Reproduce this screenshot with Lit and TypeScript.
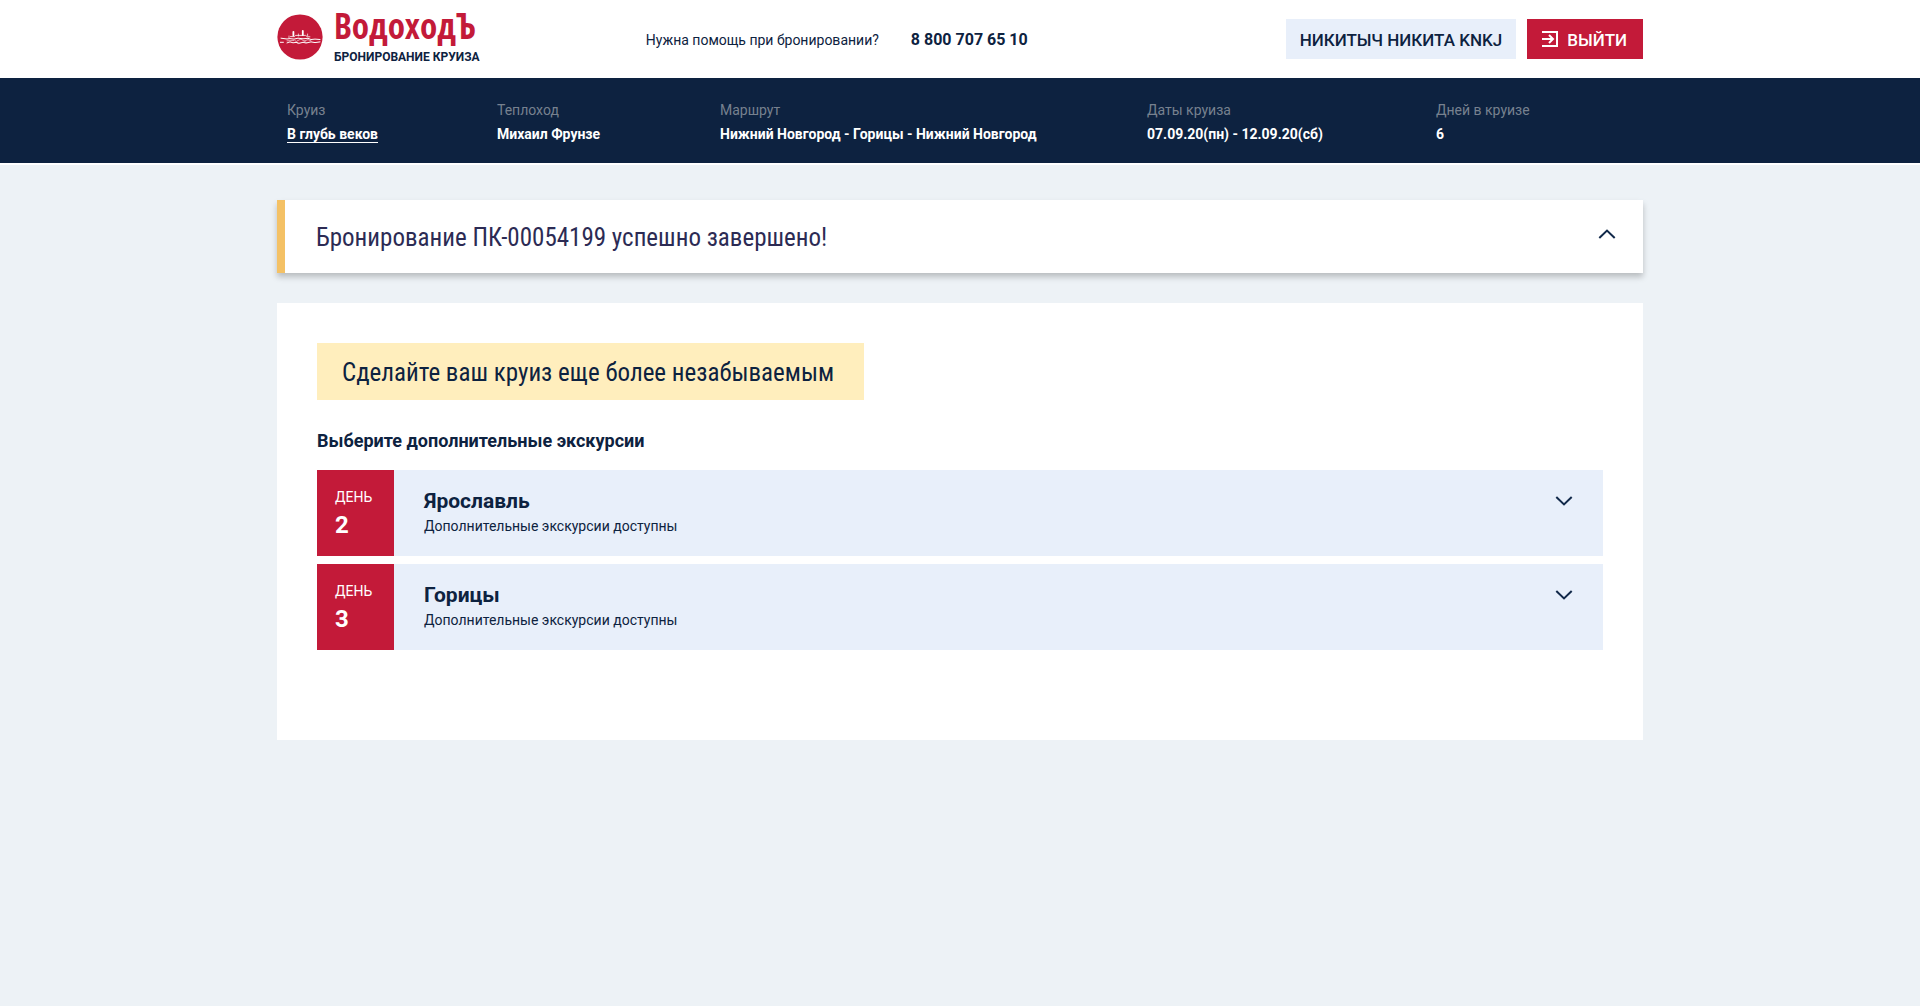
import { LitElement, html, css, svg } from "lit";
import { customElement, property, state } from "lit/decorators.js";

interface CruiseFact {
  label: string;
  value: string;
  href?: string;
}

interface ExcursionDay {
  day: number;
  city: string;
  note: string;
}

const facts: CruiseFact[] = [
  { label: "Круиз", value: "В глубь веков", href: "#cruise" },
  { label: "Теплоход", value: "Михаил Фрунзе" },
  { label: "Маршрут", value: "Нижний Новгород - Горицы - Нижний Новгород" },
  { label: "Даты круиза", value: "07.09.20(пн) - 12.09.20(сб)" },
  { label: "Дней в круизе", value: "6" },
];

const days: ExcursionDay[] = [
  { day: 2, city: "Ярославль", note: "Дополнительные экскурсии доступны" },
  { day: 3, city: "Горицы", note: "Дополнительные экскурсии доступны" },
];

@customElement("chevron-icon")
class ChevronIcon extends LitElement {
  @property({ type: Boolean }) up = false;

  static styles = css`
    :host {
      display: block;
      width: 18px;
      height: 10px;
      color: #12294a;
    }
    .icon {
      display: block;
    }
  `;

  render() {
    return html`<svg class="icon" width="18" height="10" viewBox="0 0 18 10" fill="none"
      stroke="currentColor" stroke-width="2" aria-hidden="true">
      ${this.up ? svg`<path d="M1.3 9 9 1.6 16.7 9" />` : svg`<path d="M1.3 1 9 8.4 16.7 1" />`}
    </svg>`;
  }
}

@customElement("site-header")
class SiteHeader extends LitElement {
  static styles = css`
    :host {
      display: block;
      background: #fff;
    }
    .bar {
      box-sizing: border-box;
      max-width: 1366px;
      min-height: 78px;
      margin: 0 auto;
      display: grid;
      grid-template-columns: 27% auto 1fr;
      align-items: center;
    }
    .logo {
      display: flex;
      align-items: center;
      gap: 11px;
      padding-bottom: 4px;
      color: #0d2240;
      text-decoration: none;
    }
    .emblem {
      flex: none;
    }
    .words {
      display: flex;
      flex-direction: column;
      gap: 6px;
    }
    .brand {
      font: 700 35px/34px "Open Sans Condensed", "Roboto Condensed", sans-serif;
      color: #c31a39;
    }
    .tagline {
      font: 700 12px/16px Roboto, sans-serif;
      white-space: nowrap;
    }
    .help {
      display: flex;
      align-items: center;
      gap: 32px;
      padding-top: 2px;
      font-size: 14px;
      line-height: 20px;
    }
    .phone {
      font-size: 16px;
      font-weight: 700;
      color: inherit;
      text-decoration: none;
    }
    .actions {
      display: flex;
      justify-content: flex-end;
      gap: 11px;
    }
    .button {
      display: flex;
      align-items: center;
      gap: 9px;
      height: 40px;
      padding: 2px 14px 0;
      border: 0;
      font: 500 17px/24px Roboto, sans-serif;
      color: #0d2240;
      background: #e8effa;
      white-space: nowrap;
      cursor: pointer;
    }
    .exit {
      padding: 0 16px 0 15px;
      color: #fff;
      background: #c31a39;
    }
    .exit-label {
      padding-top: 2px;
    }
  `;

  render() {
    return html`
      <header class="bar">
        <a class="logo" href="#home">
          <svg class="emblem" width="46" height="46" viewBox="0 0 46 46" aria-hidden="true">
            <circle cx="23" cy="23" r="22.6" fill="#c31a39" />
            <g fill="none" stroke="#fff" stroke-linecap="round">
              <path stroke-width="1.8" d="M16.4 17.8v3.6M25.8 17v4" />
              <path stroke-width=".7" d="M21.4 20v2M30.6 20v2M12 22v2" />
              <path stroke-width=".8" d="M13.5 22.6h4l1-1.2h10l2 1.4h2.4" />
              <path stroke-width="1" d="M4 24.2l6 .8 3-.4 4 .5 4-.9 5 .6 5-.5 3 1.2 4-.4 5 .4" />
              <path stroke-width=".6" d="M10 26.8l7-.3M20 27l4-2 3 2.2 4-1.6 3 1.2" />
              <path stroke-width="1" d="M3.4 28.3h3M10 28.9l3-1 3 .9 3-.4 3 .9 4-1 3 .7 5-1.1 4 .7 5-.7" />
              <path stroke-width=".6" d="M18 26.5l3 2.8M27 26.5l2.4 2.4" />
            </g>
          </svg>
          <span class="words">
            <span class="brand">ВодоходЪ</span>
            <span class="tagline">БРОНИРОВАНИЕ КРУИЗА</span>
          </span>
        </a>
        <div class="help">
          <span>Нужна помощь при бронировании?</span>
          <a class="phone" href="tel:88007076510">8 800 707 65 10</a>
        </div>
        <div class="actions">
          <button class="button" type="button">НИКИТЫЧ НИКИТА KNKJ</button>
          <button class="button exit" type="button">
            <svg width="16" height="16" viewBox="0 0 16 16" fill="none" stroke="#fff" stroke-width="2" aria-hidden="true">
              <path d="M0 1h15v14H0M0 8h11M7 4l4 4-4 4" />
            </svg>
            <span class="exit-label">ВЫЙТИ</span>
          </button>
        </div>
      </header>
    `;
  }
}

@customElement("cruise-facts")
class CruiseFacts extends LitElement {
  static styles = css`
    :host {
      display: block;
      background: #0d2240;
      border-bottom: 2px solid #fff;
    }
    .facts {
      max-width: 1366px;
      margin: 0 auto;
      padding: 20px 0 17px;
      display: grid;
      grid-template-columns: 210fr 223fr 427fr 289fr 217fr;
    }
    .fact {
      padding: 0 10px;
      line-height: 24px;
      white-space: nowrap;
    }
    .label {
      font-size: 14px;
      color: #77818f;
    }
    .value {
      margin: 0;
      font-size: 14px;
      font-weight: 700;
      color: #fff;
    }
    .link {
      color: inherit;
      text-underline-offset: 3px;
    }
  `;

  render() {
    return html`
      <dl class="facts">
        ${facts.map(
          (f) => html`
            <div class="fact">
              <dt class="label">${f.label}</dt>
              <dd class="value">${f.href ? html`<a class="link" href=${f.href}>${f.value}</a>` : f.value}</dd>
            </div>
          `
        )}
      </dl>
    `;
  }
}

@customElement("excursion-day")
class ExcursionDayRow extends LitElement {
  @property({ type: Number }) day = 0;
  @property() city = "";
  @property() note = "";
  @state() private open = false;

  static styles = css`
    :host {
      display: block;
    }
    .row {
      width: 100%;
      min-height: 86px;
      padding: 0;
      border: 0;
      display: grid;
      grid-template-columns: 77px 1fr auto;
      font: inherit;
      text-align: left;
      color: #0d2240;
      background: #e8effa;
      cursor: pointer;
    }
    .day,
    .info {
      display: flex;
      flex-direction: column;
      padding-top: 17px;
    }
    .day {
      padding-left: 18px;
      padding-bottom: 13px;
      color: #fff;
      background: #c31a39;
    }
    .day-label {
      font-size: 14px;
      line-height: 20px;
    }
    .day-number {
      font-size: 24px;
      line-height: 36px;
      font-weight: 700;
    }
    .info {
      padding-left: 30px;
    }
    .city {
      font-size: 21px;
      line-height: 28px;
      font-weight: 700;
    }
    .note {
      font-size: 14px;
      line-height: 22px;
    }
    .toggle {
      padding: 26px 30px 0 0;
    }
  `;

  render() {
    return html`
      <button class="row" type="button" aria-expanded=${this.open} @click=${() => (this.open = !this.open)}>
        <span class="day">
          <span class="day-label">ДЕНЬ</span>
          <span class="day-number">${this.day}</span>
        </span>
        <span class="info">
          <span class="city">${this.city}</span>
          <span class="note">${this.note}</span>
        </span>
        <span class="toggle"><chevron-icon .up=${this.open}></chevron-icon></span>
      </button>
    `;
  }
}

@customElement("app-root")
class AppRoot extends LitElement {
  @state() private open = true;

  static styles = css`
    :host {
      display: block;
      min-height: 100vh;
      background: #edf2f6;
      color: #0d2240;
      font-family: Roboto, sans-serif;
    }
    .content {
      max-width: 1366px;
      margin: 0 auto;
      padding: 35px 0 40px;
      display: flex;
      flex-direction: column;
      gap: 30px;
    }
    .done,
    .headline {
      margin: 0;
      font: 400 25px/37px "Roboto Condensed", Roboto, sans-serif;
    }
    .done-button {
      width: 100%;
      display: flex;
      align-items: flex-start;
      justify-content: space-between;
      padding: 19px 27px 17px 31px;
      border: 0;
      border-left: 8px solid #f4c165;
      font: inherit;
      text-align: left;
      color: #2c2b54;
      background: #fff;
      box-shadow: 0 4px 6px rgba(0, 0, 0, 0.22);
      cursor: pointer;
    }
    .done-toggle {
      padding-top: 10px;
    }
    .panel {
      padding: 40px 40px 90px;
      background: #fff;
    }
    .headline {
      width: fit-content;
      padding: 11px 30px 9px 25px;
      background: #ffeebd;
    }
    .subtitle {
      margin: 29px 0 17px;
      font-size: 18px;
      line-height: 24px;
      font-weight: 700;
    }
    .days {
      display: flex;
      flex-direction: column;
      gap: 8px;
    }
  `;

  render() {
    return html`
      <site-header></site-header>
      <cruise-facts></cruise-facts>
      <main class="content">
        <h1 class="done">
          <button class="done-button" type="button" aria-expanded=${this.open} @click=${() => (this.open = !this.open)}>
            <span>Бронирование ПК-00054199 успешно завершено!</span>
            <span class="done-toggle"><chevron-icon .up=${this.open}></chevron-icon></span>
          </button>
        </h1>
        <section class="panel" ?hidden=${!this.open}>
          <h2 class="headline">Сделайте ваш круиз еще более незабываемым</h2>
          <h3 class="subtitle">Выберите дополнительные экскурсии</h3>
          <div class="days">
            ${days.map((d) => html`<excursion-day .day=${d.day} .city=${d.city} .note=${d.note}></excursion-day>`)}
          </div>
        </section>
      </main>
    `;
  }
}
